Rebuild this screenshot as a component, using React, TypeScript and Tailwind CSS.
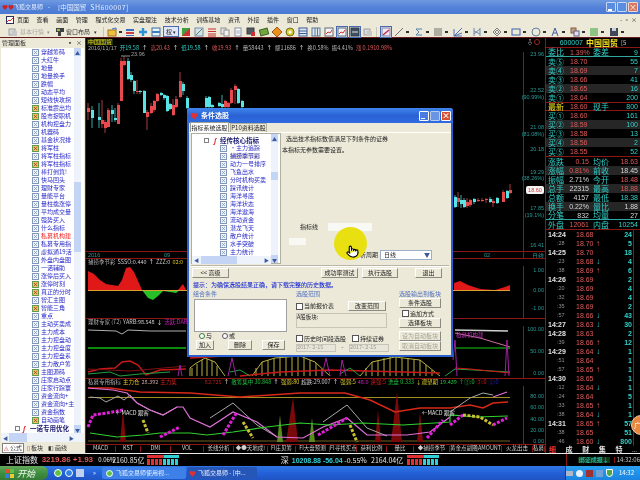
import { Pointer } from "lucide-react";
import type { ReactNode } from "react";

const treeItems: [string, boolean?, boolean?][] = [
  ["穿越筹码"], ["大红牛"], ["地量"], ["地量换手"], ["跌幅"], ["动态平均"], ["短线快攻拐"], ["标准震出均", true], ["股市捉职机", true],
  ["机构控盘力"], ["机器码"], ["基金状况排"], ["将军柱", true], ["将军柱指标"], ["将军柱指标", true], ["棒打倒箕!"], ["快马回头"], ["理财专家"],
  ["量能平台"], ["量柱擒涨停"], ["平均成交量"], ["强势买入"], ["什么指标"], ["私募机构建", false, true], ["私募专用指"], ["虚拟通19活"],
  ["外盘内盘图"], ["一诺辅助"], ["涨停后买入"], ["涨停时刻", true], ["真正的分时", true], ["智汇主图"], ["智能三角", true], ["重点"],
  ["主动买卖成"], ["主力成本"], ["主力控盘动"], ["主力控盘度"], ["主力控盘系"], ["主力散户筹"], ["主图源码", true], ["庄家启动点"],
  ["庄家行踪寰"], ["资金流向+"], ["资金流向+主"], ["资金指数"], ["自动画笔", true],
];

const dialogTree = ["•主力追踪", "捕捞季节彩", "动力一号排序", "飞鱼出水", "分时机构买卖", "踩讯统计", "海洋寻底", "海洋状态", "海洋遨海", "流动资金", "潜龙飞天", "散户统计", "水手突破", "主力统计"];

// x, body top, body bottom, wick top, wick bottom, red?
const candles: [number, number, number, number, number, boolean][] = [
  [88, 108, 112, 103, 120, true], [92, 110, 118, 106, 128, false], [99, 117, 120, 103, 128, false], [102, 120, 124, 100, 128, true],
  [105, 122, 128, 120, 133, true], [108, 110, 127, 108, 127, true], [112, 110, 114, 105, 122, false], [115, 118, 120, 108, 122, false],
  [118, 105, 124, 103, 124, true], [121, 61, 101, 58, 101, true], [124, 61, 65, 56, 66, true], [128, 61, 79, 58, 80, false],
  [131, 75, 80, 72, 82, false], [134, 81, 91, 80, 94, false], [137, 91, 92, 80, 94, true], [140, 91, 92, 90, 94, false],
  [144, 91, 113, 90, 113, false], [147, 112, 117, 110, 130, true], [151, 106, 113, 103, 114, true], [154, 101, 110, 100, 112, true],
  [157, 94, 101, 93, 102, true], [161, 93, 95, 92, 96, false], [164, 95, 98, 94, 100, false], [167, 96, 111, 95, 112, false],
  [170, 104, 109, 103, 110, false], [173, 105, 115, 99, 116, true], [176, 99, 107, 96, 108, true], [180, 81, 97, 72, 98, true],
  [183, 84, 91, 82, 95, false], [187, 98, 108, 96, 109, false],
  [206, 98, 107, 96, 108, false], [209, 97, 107, 96, 108, false], [212, 105, 107, 104, 108, false], [219, 103, 106, 102, 107, false],
  [222, 104, 107, 95, 108, false], [225, 101, 107, 100, 108, true], [228, 103, 107, 102, 108, true], [231, 90, 103, 88, 104, true],
  [235, 86, 90, 84, 104, true], [238, 89, 103, 88, 104, false], [242, 101, 107, 100, 108, false],
  [455, 197, 207, 195, 208, false], [458, 198, 202, 192, 207, true], [461, 200, 204, 195, 208, false], [464, 200, 207, 198, 208, false],
  [467, 202, 206, 198, 208, true], [470, 200, 205, 199, 207, true], [474, 199, 202, 198, 204, false], [478, 200, 201, 198, 202, true],
  [482, 200, 201, 198, 202, true], [486, 199, 200, 198, 203, true], [490, 199, 202, 197, 203, false], [493, 201, 203, 199, 207, true],
  [497, 198, 203, 197, 204, false], [503, 192, 202, 190, 202, true], [507, 191, 198, 190, 199, false], [510, 190, 193, 184, 194, true],
];

const ticks: [string, string, string, number, boolean?][] = [
  ["14:24", "18.68", "", 24, true], [":28", "18.70", "u", 5], ["14:25", "18.70", "", 18, true], [":23", "18.68", "d", 4], [":38", "18.69", "u", 6],
  ["14:26", "18.69", "", 2, true], [":20", "18.69", "", 4], [":32", "18.69", "", 4], [":35", "18.69", "", 2], [":57", "18.66", "d", 43],
  ["14:27", "18.63", "d", 30, true], ["14:28", "18.63", "", 2, true], [":39", "18.66", "u", 12], ["14:29", "18.64", "d", 1, true], [":51", "18.64", "", 1],
  [":57", "18.65", "u", 1], ["14:30", "18.65", "", 1, true], [":12", "18.64", "d", 1], [":24", "18.64", "", 5], [":33", "18.65", "u", 1],
  [":38", "18.64", "d", 1], ["14:31", "18.65", "u", 57, true], [":38", "18.65", "", 51], [":46", "18.60", "d", 800],
];

const bottomTabs: [string, string][] = [
  ["MACD", "w-[30px]"], ["KST", "w-[25px]"], ["DMI", "w-[30px]"], ["VOL", "w-[33px]"], ["长线分析", "w-[30px]"], ["◆●天地成!", "w-[34px]"], ["FI庄见筹", "w-[28px]"],
  ["FI大盘预测", "w-[34px]"], ["FI寻找买点", "w-[27px]"], ["获利比例", "w-[30px]"], ["量比", "w-[27px]"], ["◆捕捞季节", "w-[36px]"], ["黄金点副图", "w-[28px]"],
  ["AMOUNT", "w-[24px]"], ["火龙出击", "w-[31px]"], ["私募", "w-[12px]"],
];

function TreeIcon({ hot }: { hot?: boolean }) {
  return (
    <svg width="7" height="7" viewBox="0 0 7 7" className="shrink-0">
      <rect x="0.5" y="0.5" width="6" height="6" fill={hot ? "#e8c060" : "#eef2fa"} stroke={hot ? "#5f9a50" : "#7f97b8"} />
      <path d="M2 5L5 2M2 2l3 3" stroke={hot ? "#b04020" : "#8a96a8"} strokeWidth="0.8" />
    </svg>
  );
}

function ScrollArrow({ up }: { up?: boolean }) {
  return (
    <div className="h-[8px] w-full shrink-0 bg-[#c4d4f4] flex items-center justify-center text-[#3a5a9c] text-[5px] leading-none">{up ? "▲" : "▼"}</div>
  );
}

function Tool({ kind, arrow }: { kind: string; arrow?: boolean }) {
  const shapes: Record<string, ReactNode> = {
    folder: <><rect x="1" y="3" width="8" height="6" fill="#f0c040" stroke="#a07818" /><path d="M5 2l4-1v2" stroke="#3a70d0" fill="none" /></>,
    bars: <><rect x="1" y="2" width="8" height="2" fill="#3a70c0" /><rect x="1" y="5" width="8" height="2" fill="#d04040" /><rect x="1" y="8" width="8" height="1" fill="#3a70c0" /></>,
    cross: <path d="M5 1v8M1 5h8" stroke="#2a90d8" strokeWidth="2.4" />,
    box: <><rect x="1" y="1" width="8" height="8" fill="#e8f0f8" stroke="#3a70a0" /><rect x="1" y="4" width="8" height="2" fill="#3a80c0" /></>,
    flag: <><rect x="1" y="1" width="8" height="8" fill="#40a040" /><path d="M1 9L9 1v8z" fill="#d03030" /></>,
    grid: <><rect x="1" y="1" width="8" height="8" fill="#d8e0e8" stroke="#7090a8" /><path d="M2 8l6-6" stroke="#409060" /></>,
    lines: <path d="M1 2h8M1 4.5h8M1 7h8M1 9h8" stroke="#c83030" strokeWidth="1.2" />,
    pages: <><rect x="1" y="1" width="5" height="6" fill="#e8e8e8" stroke="#909090" /><rect x="4" y="3" width="5" height="6" fill="#f0f0f0" stroke="#909090" /></>,
    doc: <><rect x="2" y="1" width="6" height="8" fill="#fff" stroke="#8090a8" /><path d="M3 4h4M3 6h4" stroke="#a0a8b8" /></>,
    panel: <><rect x="1" y="1" width="7" height="6" fill="#505860" stroke="#404040" /><rect x="5" y="5" width="4" height="4" fill="#d03030" /></>,
    money: <><rect x="1" y="2" width="8" height="6" fill="#70a840" stroke="#406020" transform="rotate(-15 5 5)" /></>,
    diamond: <path d="M5 0l5 5-5 5-5-5z" fill="#e89020" stroke="#a05810" />,
    gear: <><circle cx="5" cy="5" r="4" fill="#d8c830" stroke="#707020" /><circle cx="5" cy="5" r="1.5" fill="#fff" /></>,
    tbl: <><rect x="1" y="1" width="8" height="8" fill="#dfe8f4" stroke="#3a5a90" /><path d="M1 4h8M1 6.5h8" stroke="#3a5a90" /></>,
    cols: <><rect x="1" y="1" width="8" height="8" fill="#dfe8f4" stroke="#5a7a90" /><path d="M4 1v8M6.5 1v8" stroke="#5a7a90" /></>,
    win: <><rect x="1" y="1" width="8" height="8" fill="#f4f4f4" stroke="#606878" /><path d="M2 7l2-2 2 1 2-3" stroke="#d03030" fill="none" /></>,
    dark: <><rect x="1" y="1" width="8" height="8" fill="#405060" stroke="#303840" /><path d="M2 5h6" stroke="#e0e0e0" /></>,
    pen: <><rect x="1" y="1" width="8" height="8" fill="#f0e8f0" stroke="#8080a0" /><path d="M2 8l6-5" stroke="#c03050" strokeWidth="1.5" /></>,
    slash: <path d="M1 9L9 1" stroke="#707070" />,
    sigma: <path d="M8 2H2l3 3-3 3h6" stroke="#5080b0" fill="none" />,
    vbars: <path d="M2 1v8M4 1v8M6 1v8M8 1v8" stroke="#707070" />,
    fan: <path d="M1 9L9 1M1 9l8-3M1 9h8M1 2v7" stroke="#5070b8" fill="none" />,
    fan2: <path d="M2 1v8M8 1v8M2 7l6-5M2 4l6 3" stroke="#7088b8" fill="none" />,
    wave: <path d="M1 5l4-4 4 4-4 4zM3 5l2-2 2 2-2 2z" stroke="#808080" fill="none" />,
    rect: <rect x="1" y="2" width="8" height="6" fill="none" stroke="#4060b0" />,
    oval: <circle cx="5" cy="5" r="4" fill="none" stroke="#6080a0" />,
    a: <path d="M2 9l3-8 3 8M3 6h4" stroke="#4060a0" fill="none" />,
    copy: <><rect x="1" y="1" width="5" height="5" fill="#c0a080" stroke="#806040" /><rect x="4" y="4" width="5" height="5" fill="#dde" stroke="#606080" /></>,
    rainbow: <path d="M1 2h8M1 4h8M1 6h8M1 8h8" stroke="#30a030" strokeWidth="1.1" />,
    save: <><rect x="1" y="1" width="8" height="8" fill="#404858" /><rect x="3" y="1" width="4" height="3" fill="#c8d0d8" /></>,
    gray: <><rect x="1" y="2" width="6" height="6" fill="#d8d8d8" stroke="#a0a0a0" /><rect x="4" y="4" width="5" height="5" fill="#c8c8c8" /></>,
    layout: <><path d="M1 1h8v4H6v4H3V5H1z" fill="#404040" /><rect x="2" y="2" width="3" height="2" fill="#90c040" /></>,
  };
  return (
    <div className="flex items-center shrink-0">
      <svg width="10" height="10" viewBox="0 0 10 10">{shapes[kind]}</svg>
      {arrow && <span className="ml-[2px] mr-[3px] w-[3px] h-[2px] bg-[#303030]" />}
    </div>
  );
}

function Btn({ w, children, off }: { w: string; children: ReactNode; off?: boolean }) {
  return (
    <div className={`${w} h-[10px] shrink-0 flex items-center justify-center whitespace-nowrap bg-[#ece9d8] border border-white border-r-[#8a8a80] border-b-[#8a8a80] text-[6px] leading-none ${off ? "text-[#a8a598]" : "text-[#222]"}`}>
      {children}
    </div>
  );
}

function Check({ label }: { label: string }) {
  return (
    <div className="flex items-center gap-[1px] text-[6px] leading-none text-[#222] shrink-0 whitespace-nowrap">
      <span className="w-[7px] h-[7px] bg-white border border-[#555]" />
      {label}
    </div>
  );
}

function Quote({ a, b, c, d, dark, yellow, line }: { a: string; b: string; c?: string; d: string; dark?: boolean; yellow?: boolean; line?: string }) {
  return (
    <div className={`h-[9px] shrink-0 flex items-center px-[2px] leading-none ${dark ? "bg-[#262626]" : ""} ${line ?? ""}`}>
      <span className={`w-[22px] text-[8px] ${yellow ? "text-[#f0e020]" : "text-[#30d0c8]"}`}>{a}</span>
      <span className="w-[23px] text-[7px] text-[#e05a5a] [font-family:'Liberation_Sans',sans-serif]">{b}</span>
      <span className="w-[20px] text-[8px] text-[#30d0c8]">{c}</span>
      <span className="flex-1 text-right text-[7px] text-[#30d0c8] [font-family:'Liberation_Sans',sans-serif]">{d}</span>
    </div>
  );
}

function Stat({ a, b, c, d, bc = "#e05a5a", dc = "#e05a5a", dark, line }: { a: string; b: string; c: string; d: string; bc?: string; dc?: string; dark?: boolean; line?: string }) {
  return (
    <div className={`h-[9px] shrink-0 flex items-center px-[2px] leading-none ${dark ? "bg-[#262626]" : ""} ${line ?? ""}`}>
      <span className="w-[19px] text-[8px] text-[#30d0c8]">{a}</span>
      <span className="w-[22px] text-right text-[7px] [font-family:'Liberation_Sans',sans-serif]" style={{ color: bc }}>{b}</span>
      <span className="w-[21px] pl-[4px] text-[8px] text-[#30d0c8]">{c}</span>
      <span className="flex-1 text-right text-[7px] [font-family:'Liberation_Sans',sans-serif]" style={{ color: dc }}>{d}</span>
    </div>
  );
}

function QuotePanel() {
  return (
    <div className="w-[95px] shrink-0 border-l border-[#8a1616] flex flex-col overflow-hidden">
      <div className="h-[10px] shrink-0 flex items-center justify-center gap-[3px] border-b border-[#8a1616] whitespace-nowrap">
        <span className="text-[7px] text-[#30d0c8] leading-none [font-family:'Liberation_Sans',sans-serif]">600007</span>
        <span className="text-[8px] text-[#f0e020] font-bold leading-none">中国国贸</span>
        <span className="text-[6px] text-[#c0c0c0] leading-none">[5</span>
      </div>
      <Quote a="委比" b="1.39%" c="委差" d="9" line="border-b border-[#30a8a0]" />
      <Quote a="卖⑤" b="18.70" d="55" />
      <Quote a="卖④" b="18.69" d="7" dark />
      <Quote a="卖③" b="18.66" d="41" />
      <Quote a="卖②" b="18.65" d="16" dark />
      <Quote a="卖①" b="18.64" d="200" />
      <Quote a="最新" b="18.60" c="现手" d="800" yellow line="border-y border-[#8a1616]" />
      <Quote a="买①" b="18.60" d="161" />
      <Quote a="买②" b="18.59" d="100" dark />
      <Quote a="买③" b="18.58" d="13" />
      <Quote a="买④" b="18.56" d="2" dark />
      <Quote a="买⑤" b="18.55" d="52" />
      <div className="h-px shrink-0 bg-[#8a1616]" />
      <Stat a="涨跌" b="0.15" c="均价" d="18.63" />
      <Stat a="涨幅" b="0.81%" c="前收" d="18.45" dc="#d8d8d8" dark />
      <Stat a="振幅" b="2.71%" c="今开" d="18.48" bc="#d8d8d8" />
      <Stat a="总手" b="22315" c="最高" d="18.88" bc="#d8d8d8" dark />
      <Stat a="总额" b="4157" c="最低" d="18.38" bc="#d8d8d8" dc="#30d0c8" />
      <Stat a="换手" b="0.22%" c="量比" d="1.88" bc="#d8d8d8" dc="#d8d8d8" dark />
      <Stat a="分笔" b="832" c="均量" d="27" bc="#d8d8d8" dc="#d8d8d8" line="border-b border-[#30a8a0]" />
      <Stat a="外盘" b="12061" c="内盘" d="10254" dc="#30d0c8" />
      <div className="h-[1px] shrink-0 bg-[#8a1616]" />
      <div className="flex flex-col shrink-0 border-r border-[#8a1616] w-[88px]">
        {ticks.map((t, i) => (
          <div key={i} className="h-[9px] shrink-0 flex items-center leading-none [font-family:'Liberation_Sans',sans-serif]">
            <span className={`w-[30px] ${t[4] ? "pl-[2px] text-[7px] text-[#e0e0e0] font-bold" : "pl-[11px] text-[#909090] text-[5.5px]"}`}>{t[0]}</span>
            <span className="w-[20px] text-[7px] text-[#e05a5a]">{t[1]}</span>
            <span className={`w-[8px] text-[8px] font-bold ${t[2] === "u" ? "text-[#e05a5a]" : "text-[#30d0c8]"}`}>{t[2] === "u" ? "↑" : t[2] === "d" ? "↓" : ""}</span>
            <span className="flex-1 text-right pr-[1px] text-[7px] text-[#30d0c8] font-bold">{t[3]}</span>
          </div>
        ))}
      </div>
      <div className="flex items-center justify-between pl-[3px] pr-[3px] h-[7px] shrink-0 bg-black text-[7px] leading-none">
        <span className="text-[#f03030] font-bold">细</span><span className="text-[#e0e0e0] font-bold">成</span><span className="text-[#e0e0e0] font-bold">财</span><span className="text-[#e0e0e0] font-bold">集</span><span className="text-[#e0e0e0] font-bold">特</span><span className="text-[#e0e0e0] text-[6px]">...</span>
      </div>
    </div>
  );
}

function Axis({ items }: { items: [number, string, string?][] }) {
  return (
    <>
      {items.map(([y, t, c], i) => (
        <text key={i} x="544" y={y + 2} textAnchor="end" fontSize="5.5" fill={c ?? "#2a9a98"} fontFamily="Liberation Sans">{t}</text>
      ))}
    </>
  );
}

function PanelLabel({ children }: { children: ReactNode }) {
  return (
    <div className="h-[8px] shrink-0 whitespace-nowrap overflow-hidden flex items-center gap-[2px] text-[5.5px] leading-none px-[2px] border-t border-[#8a1616]">
      {children}
    </div>
  );
}

function Charts() {
  return (
    <div className="flex-1 min-w-0 flex flex-col bg-black border-l border-[#8a1616]">
      <div className="h-[14px] shrink-0 flex flex-col relative">
        <div className="h-[7px] flex items-center justify-between pr-[6px]">
          <span className="ml-[1px] px-[1px] bg-[#203010] text-[#e8d820] text-[6px] leading-none">中国国贸</span>
          <span className="flex items-center gap-[1px] mr-[-1px]"><span className="text-[#e0e0e0] text-[6px] leading-none">⇩</span><span className="w-[6px] h-[6px] rounded-full border border-[#a02020]" /></span>
        </div>
        <div className="h-[7px] flex items-center gap-[3px] pl-[2px] whitespace-nowrap text-[5.5px] leading-none">
          <span className="text-[#b0b0b0]">2016/11/17</span>
          <span className="text-[#30d0c8]">开19.58</span><span className="text-white">↑</span>
          <span className="text-[#e05a5a]">高20.43</span><span className="text-white">↑</span>
          <span className="text-[#30d0c8]">低19.58</span><span className="text-white">↑</span>
          <span className="text-[#e05a5a]">收19.93</span><span className="text-white">↑</span>
          <span className="text-[#b8b8b8]">量58443</span><span className="text-white">↑</span>
          <span className="text-[#b8b8b8]">额11686</span><span className="text-white">↑</span>
          <span className="text-[#b8b8b8]">换0.58%</span>
          <span className="text-[#b8b8b8]">振4.41%</span>
          <span className="text-[#e05a5a]">涨 0.1910.98%</span>
        </div>
      </div>
      {/* candles */}
      <svg width="459" height="206" viewBox="86 52 459 206" className="block shrink-0">
        {candles.map(([x, t, b, wt, wb, red], i) => (
          <g key={i}>
            <line x1={x} x2={x} y1={wt} y2={wb} stroke={red ? "#a83a3e" : "#3aa8a8"} />
            <rect x={x - 1} y={t} width="3" height={b - t} fill={red ? "#e8494c" : "#58e4e4"} />
          </g>
        ))}
        <path d="M121 56h9" stroke="#909090" />
        <text x="131" y="56" fontSize="5.5" fill="#a0a0a0" fontFamily="Liberation Sans">23.96</text>
        <line x1="523.5" x2="523.5" y1="52" y2="258" stroke="#8a1616" />
        <Axis items={[[54, "23.96"], [90, "22.52"], [97, "(90.99%)"], [127, "21.08"], [134, "(81.08%)"], [149, "20.18"], [172, "19.29"], [178, "(38.26%)"], [208, "17.85"], [215, "(19.1%)"], [245, "16.41"]]} />
        <rect x="526" y="186" width="18" height="8" rx="2" fill="#f4f4f4" />
        <text x="535" y="192" textAnchor="middle" fontSize="5.5" fill="#d04040" fontFamily="Liberation Sans">18.60</text>
        <line x1="86" x2="545" y1="251.5" y2="251.5" stroke="#8a1616" />
        <text x="88" y="257" fontSize="5.5" fill="#2a9a98" fontFamily="Liberation Sans">2016</text>
        <text x="164" y="257" fontSize="5.5" fill="#2a9a98" fontFamily="Liberation Sans">09</text>
        <text x="484" y="257" fontSize="5.5" fill="#2a9a98" fontFamily="Liberation Sans">02</text>
        <text x="544" y="257.5" textAnchor="end" fontSize="6" fill="#2a9a98" fontFamily="Noto Sans CJK SC">日线</text>
      </svg>
      {/* oscillator */}
      <PanelLabel>
        <span className="text-[#b0b0b0]">捕捞季节彩</span><span className="text-[#c8c8c8]">SSSO:0.440</span><span className="text-white">↑</span><span className="text-[#c8c8c8]">ZZZ:0</span><span className="text-[#d8c820]">02:0</span>
      </PanelLabel>
      <svg width="459" height="52" viewBox="86 266 459 52" className="block shrink-0">
        <path d="M88 290V271L94 274L100 280L106 284L112 285L118 286L122 280L126 268L130 267L134 272L138 281L142 290Z" fill="#e01818" />
        <path d="M142 290L148 298L153 300L158 296L163 291L170 292L176 293L180 290Z" fill="#28c028" />
        <path d="M178 290L183 284L186 290Z" fill="#e01818" />
        <path d="M454 290V283L460 281L468 285L480 289L495 290L505 287L510 285V290Z" fill="#e01818" />
        <path d="M88 290.5H510" stroke="#d8a030" />
        <line x1="523.5" x2="523.5" y1="266" y2="318" stroke="#8a1616" />
        <Axis items={[[270, "1.00"], [290, "0.00"], [308, "-1.00"]]} />
      </svg>
      {/* 理财专家 */}
      <PanelLabel>
        <span className="text-[#b0b0b0]">理财专家 (72)</span><span className="text-[#c8c8c8]">YARB:98.548</span><span className="text-white">↓</span><span className="text-[#d020c0]">活跃:DAR</span>
      </PanelLabel>
      <svg width="459" height="52" viewBox="86 326 459 52" className="block shrink-0">
        <path d="M88 330L116 331L122 334L128 330L150 331L186 331" stroke="#b0b0b0" fill="none" />
        <path d="M88 348H186" stroke="#0c8a0c" strokeWidth="2" />
        <path d="M455 330L508 331" stroke="#d0d0d0" strokeWidth="1.4" />
        <path d="M455 333L480 338L510 347" stroke="#d070a0" />
        <path d="M455 348H510" stroke="#0c8a0c" strokeWidth="1.6" />
        <path d="M192 376V368M197 376V364M202 376V360M207 376V359M212 376V361M217 376V366M256 376V368M262 376V362M268 376V360M274 376V358M280 376V358M286 376V357M292 376V357M298 376V357M304 376V358M310 376V360M316 376V363M322 376V369M366 376V368M372 376V362M378 376V360M384 376V358M390 376V357M396 376V357M402 376V358M408 376V358M414 376V359M420 376V360M426 376V365M432 376V370" stroke="#b8b040" />
        <path d="M190 376V368L195 364L205 358L215 362L225 376M252 376L262 362L275 358L300 356L315 362L330 376M360 376L372 362L395 357L420 360L440 376" stroke="#b8b040" fill="none" />
        <path d="M88 372L100 369L115 368L122 362L130 361L138 365L146 375L160 370L186 369M190 358L225 356M240 376L280 372L330 370L440 373" stroke="#c81818" strokeWidth="1.4" fill="none" />
        <path d="M88 369L130 371L186 366" stroke="#801010" fill="none" />
        <path d="M88 374L110 372L120 376L140 374L170 372M230 372L240 370L250 376M340 374L350 368L360 376M445 376L455 369L510 372" stroke="#20a040" fill="none" />
        <path d="M178 376L180 365L182 376M228 376L232 358L236 376M322 376L326 358L330 376M340 376L342 360L346 376M453 360L455 340L457 376M505 376L507 340L509 376" stroke="#a020a0" fill="none" />
        <path d="M455 368L470 369L490 371L510 373" stroke="#d01818" strokeWidth="1.2" fill="none" />
        <line x1="523.5" x2="523.5" y1="326" y2="378" stroke="#8a1616" />
        <text x="456" y="337" fontSize="5.5" fill="#c030c0" fontFamily="Noto Sans CJK SC">私募机构建</text>
        <Axis items={[[329, "100.00"], [351, "50.00"], [373, "0.00"]]} />
      </svg>
      {/* 私募专用指标 */}
      <PanelLabel>
        <span className="text-[#b0b0b0]">私募专用指标</span><span className="text-[#e8c020]">主力仓</span><span className="text-[#d0a0a0]">28.392</span><span className="text-[#d02020]">主力集</span>
        <span className="ml-[26px] text-[#c02020]">82.725</span><span className="text-white">↑</span><span className="text-[#20c040]">散筹集中 30.848</span><span className="text-white">↑</span><span className="text-[#e0d030]">强弱:80</span><span className="text-[#c8c8c8]">超跌:29.007</span><span className="text-white">↑</span><span className="text-[#e0d030]">强弱:5</span><span className="text-[#d020c0]">48.0</span><span className="text-[#d02020]">资强:5</span><span className="text-[#20c040]">洗盘 0.333</span><span className="text-[#e0d030]">↓观望期</span><span className="text-[#20c040]">19.439</span><span className="text-[#20c040]">↑①:0</span><span className="text-[#d02020]">②:0</span><span className="text-[#2020c0]">③:0</span>
      </PanelLabel>
      <svg width="459" height="58" viewBox="86 386 459 58" className="block shrink-0">
        <path d="M88 397.5H510" stroke="#a09020" />
        <path d="M88 441H510" stroke="#706020" />
        <path d="M286 442L293 397L298 442ZM391 442L397 392L402 442ZM375 442L378 410L381 442ZM417 442L420 412L423 442ZM120 442L123 410L126 442Z" fill="#7a0a0a" />
        <path d="M277 442L280 415L283 442ZM309 442L312 418L315 442" fill="#5a8a20" />
        <path d="M88 388L110 388L125 390L140 392L190 393L240 397L300 393L345 393L370 400L395 412L420 408L450 408L470 405L483 408L493 403L508 402" stroke="#d82818" strokeWidth="1.4" fill="none" />
        <path d="M90 397L100 398L106 402L112 399L118 396L124 400L130 395L137 403L150 410L163 415L177 407M210 418L233 403L257 425L277 437M323 422L347 405L367 428L387 436M450 412L470 398L483 393L493 395" stroke="#a8a8a8" fill="none" />
        <path d="M88 388L100 389L113 390L127 393L137 403L150 410L163 415L177 407L183 407L190 418L210 427L233 412L257 422L277 437L303 438L323 427L347 418L367 435L387 435L407 435L430 432L450 417M493 397L507 392" stroke="#e070d8" strokeWidth="1.2" fill="none" />
        <path d="M90 433L117 437L143 435L160 433L190 433L207 435L233 432L267 427L300 423L330 425L363 423L403 425L450 422L450 415L477 417L508 416" stroke="#30d030" strokeWidth="1.2" fill="none" />
        <path d="M88 427L93 415L107 413L123 410M160 437L180 427M223 435L237 412M318 435L347 418M427 438L443 420M450 425L463 415M493 425L507 418" stroke="#e020d8" strokeWidth="3" strokeDasharray="3 1.5" fill="none" />
        <path d="M143 420L148 433M243 422L253 438M350 425L357 442M463 415L480 417L493 425" stroke="#c8c030" strokeWidth="3" strokeDasharray="3 1.5" fill="none" />
        <text x="116" y="415" fontSize="5.5" fill="#e0e0e0" fontFamily="Noto Sans CJK SC">←MACD 跟客</text>
        <text x="422" y="415" fontSize="5.5" fill="#e0e0e0" fontFamily="Noto Sans CJK SC">←MACD 跟客</text>
        <line x1="523.5" x2="523.5" y1="386" y2="444" stroke="#8a1616" />
        <Axis items={[[396, "80.00"], [407, "60.00"], [419, "40.00"], [430, "20.00"], [441, "0.00"]]} />
      </svg>
      <div className="h-[9px] shrink-0 flex items-center whitespace-nowrap border-t border-[#8a1616] text-[5.5px] leading-none text-[#d0d0d0]">
        {bottomTabs.map(([t, w]) => (
          <span key={t} className={`${w} shrink-0 text-center border-r border-[#8a1616]`}>{t}</span>
        ))}
      </div>
    </div>
  );
}

function LeftPanel() {
  return (
    <div className="w-[85px] shrink-0 flex flex-col bg-[#ece9d8]">
      <div className="h-[10px] shrink-0 flex items-center justify-between px-[2px] text-[6px] leading-none text-[#333]">
        <span>管理面板</span>
        <span className="flex gap-[3px] text-[6px] mr-[1px]"><span>▪</span><span>×</span></span>
      </div>
      <div className="flex-1 flex min-h-0 mx-[1px] bg-white">
        <div className="flex-1 min-w-0 flex flex-col overflow-hidden">
          {treeItems.map(([name, hot, red], i) => (
            <div key={i} className="h-[8px] shrink-0 flex items-center pl-[31px] gap-[2px]">
              <TreeIcon hot={hot} />
              <span className={`text-[6px] leading-none whitespace-nowrap ${red ? "text-[#f02020]" : "text-[#2828c8]"}`}>{name}</span>
            </div>
          ))}
          <div className="h-[8px] shrink-0 flex items-center pl-[14px] gap-[3px]">
            <span className="w-[5px] h-[5px] border border-[#808080] bg-white" />
            <span className="text-[#e02020] italic text-[7px] leading-none font-bold w-[4px]">ʃ</span>
            <span className="text-[6.5px] leading-none font-bold text-[#1a1a70] whitespace-nowrap">一诺专用优化</span>
          </div>
        </div>
        <div className="w-[7px] shrink-0 mr-[3px] bg-[#eef2fb] flex flex-col justify-between">
          <ScrollArrow up />
          <div className="mt-[126px] mb-[173px] flex-1 bg-[#c4d4f4]" />
          <ScrollArrow />
        </div>
      </div>
      <div className="h-[9px] shrink-0 mx-[1px] bg-[#eef2fb] flex items-center px-[2px] text-[#3a5a9c] text-[5px]">
        <span>◀</span><span className="ml-[1px] w-[18px] h-full bg-[#c4d4f4]" /><span className="ml-auto mr-[8px]">▶</span>
      </div>
      <div className="h-[11px] shrink-0 flex items-center text-[6px] leading-none text-[#333] pl-[2px] gap-[1px] whitespace-nowrap">
        <span className="flex items-center gap-[1px] bg-white px-[1px] h-[10px] border border-[#808080]"><span className="text-[#d03030]">◬</span>公式</span>
        <span className="flex items-center gap-[1px] px-[2px]"><span className="text-[#d03030]">▯</span>板块</span>
        <span className="flex items-center gap-[1px] px-[2px]"><span className="text-[#303030]">◧</span>画线</span>
      </div>
    </div>
  );
}

function ConditionDialog() {
  return (
    <div className="absolute left-[187px] top-[108px] w-[266px] h-[249px] flex flex-col border-2 border-t-0 border-[#2a5fd0] rounded-t-[3px] bg-[#ece9d8] text-[#222] z-10">
      <div className="h-[15px] shrink-0 -mx-[2px] rounded-t-[3px] flex items-center pl-[3px] pr-[2px] bg-gradient-to-b from-[#3f86ee] via-[#2a62d4] to-[#2f6ce0]">
        <span className="text-[#e03030] text-[8px] leading-none">♥</span>
        <span className="ml-[3px] text-white text-[7px] font-bold leading-none">条件选股</span>
        <span className="ml-auto flex gap-[1px]">
          <span className="w-[10px] h-[10px] bg-[#4a7ce0] border border-white rounded-[1px] flex items-end pl-[1px] pb-[1px]"><span className="w-[4px] h-[1px] bg-white" /></span>
          <span className="w-[10px] h-[10px] bg-[#6a94e4] border border-[#b8ccf0] rounded-[1px]" />
          <span className="w-[10px] h-[10px] bg-[#d85030] border border-white rounded-[1px] text-white text-[8px] font-bold leading-none flex items-center justify-center">×</span>
        </span>
      </div>
      <div className="h-[10px] shrink-0 flex items-end pl-[1px] text-[6px] leading-none border-b border-white">
        <span className="w-[39px] h-[10px] flex items-center justify-center bg-white border border-b-0 border-[#a0a090] rounded-t-[1px] whitespace-nowrap">指标系统选股</span>
        <span className="w-[37px] h-[9px] flex items-center justify-center border border-b-0 border-[#b0b0a0] ml-[1px] whitespace-nowrap">P10资料选股</span>
      </div>
      <div className="h-[131px] shrink-0 flex">
        <div className="w-[90px] shrink-0 ml-[2px] flex border border-[#b0b0a0] bg-white pr-[2px]">
          <div className="flex-1 min-w-0 flex flex-col">
            <div className="h-[8px] mt-[2px] shrink-0 flex items-center pl-[12px]">
              <span className="w-[5px] h-[5px] border border-[#808080]" />
              <span className="ml-[5px] w-[6px] text-[#e02020] italic text-[7px] font-bold leading-none">ʃ</span>
              <span className="text-[6.5px] font-bold text-[#1a1a70] leading-none whitespace-nowrap">经传核心指标</span>
            </div>
            {dialogTree.map((t, i) => (
              <div key={t} className="h-[8px] shrink-0 flex items-center pl-[28px] gap-[3px] overflow-hidden">
                <TreeIcon />
                <span className={`text-[6px] leading-none whitespace-nowrap text-[#2828c8] ${i === 1 ? "bg-[#e4e2d8]" : ""}`}>{t}</span>
              </div>
            ))}
            <div className="mt-auto h-[8px] shrink-0 bg-[#eef2fb] flex items-center text-[5px] text-[#3a5a9c] px-[2px]">
              <span>◀</span><span className="ml-[2px] w-[36px] h-full bg-[#c4d4f4]" /><span className="ml-auto">▶</span>
            </div>
          </div>
          <div className="w-[7px] shrink-0 bg-[#eef2fb] flex flex-col">
            <ScrollArrow up />
            <div className="mt-[30px] h-[8px] bg-[#c4d4f4]" />
            <div className="flex-1" />
            <ScrollArrow />
          </div>
        </div>
        <div className="flex-1 min-w-0 flex flex-col pl-[1px] text-[6px] leading-none">
          <div className="pt-[3px] pl-[4px] whitespace-nowrap">选出技术指标数值满足下列条件的证券</div>
          <div className="pt-[5px]">本指标无参数需要设置。</div>
          <div className="mt-[70px] flex items-center pl-[18px] gap-[10px]"><span>指标线</span><span className="w-[44px] h-[8px] bg-[#f8f8f4]" /></div>
          <div className="mt-[7px] ml-[7px] w-[17px] h-[7px] bg-[#f8f8f4]" />
          <div className="mt-[5px] flex items-center justify-end pr-[19px] gap-[2px]">
            <span>分析周期</span>
            <span className="w-[52px] h-[10px] bg-white border border-[#9ab0c8] flex items-center justify-between pl-[3px] pr-[1px]">日线<span className="text-[#3a5a9c] text-[6px]">▼</span></span>
          </div>
        </div>
      </div>
      <div className="h-[2px] shrink-0 mt-[1px] mx-[2px] border-y border-t-[#b8b5a8] border-b-white" />
      <div className="mt-[1px] shrink-0 flex items-center pl-[3px] pr-[9px]">
        <Btn w="w-[37px]">&lt;&lt; 高级</Btn>
        <div className="ml-auto flex gap-[4px]">
          <Btn w="w-[37px]">成功率测试</Btn>
          <Btn w="w-[36px]">执行选股</Btn>
          <span className="w-[9px]" />
          <Btn w="w-[27px]">退出</Btn>
        </div>
      </div>
      <div className="mt-[4px] pl-[4px] text-[6px] leading-none text-[#2030d0] font-medium whitespace-nowrap">提示：为确保选股结果正确，请下载完整的历史数据。</div>
      <div className="flex-1 flex mt-[3px] pl-[4px] text-[6px] leading-none">
        <div className="w-[100px] shrink-0 flex flex-col">
          <span className="text-[#5070c0]">组合条件</span>
          <div className="h-[33px] w-[93px] shrink-0 mt-[2px] ml-[1px] bg-white border border-[#a0a0a0]" />
          <div className="flex items-center h-[6px] shrink-0 mt-[1px] pl-[6px] gap-[10px]">
            <span className="flex items-center gap-[1px]"><span className="w-[6px] h-[6px] rounded-full border border-[#3a7a3a] bg-white" />与</span>
            <span className="flex items-center gap-[1px]"><span className="w-[6px] h-[6px] rounded-full border border-[#556] bg-white" />或</span>
          </div>
          <div className="flex mt-[1px] pl-[3px]">
            <Btn w="w-[18px]">加入</Btn>
            <span className="w-[14px]" />
            <Btn w="w-[24px]">删除</Btn>
            <span className="w-[10px]" />
            <Btn w="w-[23px]">保存</Btn>
          </div>
        </div>
        <div className="w-[100px] shrink-0 flex flex-col pl-[3px]">
          <span className="text-[#5070c0]">选股范围</span>
          <div className="flex items-center justify-between pr-[7px] mt-[4px]">
            <Check label="当前报价表" />
            <Btn w="w-[38px]">改变范围</Btn>
          </div>
          <div className="mt-[2px] w-[91px] h-[15px] shrink-0 border border-[#c8c5b8] text-[5.5px] leading-none pt-[1px]">A股板块:</div>
          <div className="mt-[7px] flex gap-[6px]"><Check label="历史时间段选股" /><Check label="持续证券" /></div>
          <div className="mt-[2px] flex items-center text-[5.5px] leading-none text-[#9a988c] whitespace-nowrap">
            <span className="w-[40px] h-[8px] bg-[#e8e6da] border border-[#c8c5b8] flex items-center">2017- 2-15</span>
            <span className="w-[13px] text-center text-[#222]">-</span>
            <span className="w-[40px] h-[8px] bg-[#e8e6da] border border-[#c8c5b8] flex items-center">2017- 2-15</span>
          </div>
        </div>
        <div className="flex-1 min-w-0 flex flex-col pl-[6px]">
          <span className="text-[#5070c0] whitespace-nowrap">选股输出到板块</span>
          <div className="mt-[1px]"><Btn w="w-[42px]">条件选股</Btn></div>
          <div className="mt-[2px] pl-[3px]"><Check label="追加方式" /></div>
          <div className="mt-[1px]"><Btn w="w-[42px]">选择板块</Btn></div>
          <div className="mt-[3px]"><Btn w="w-[42px]" off>设为自动板块</Btn></div>
          <div><Btn w="w-[42px]" off>取消自动板块</Btn></div>
        </div>
      </div>
    </div>
  );
}

function Bars() {
  return (
    <svg width="32" height="10" viewBox="0 0 32 10" className="shrink-0">
      <rect x="0" y="0" width="17" height="3" fill="#e03030" />
      <rect x="17" y="0" width="15" height="3" fill="#30d0d8" />
      {[0, 4, 8, 12, 16, 20, 24, 28].map((v, i) => (
        <rect key={v} x={v} y="4" width="3" height="6" fill={i < 4 ? "#e03030" : "#30d0d8"} />
      ))}
    </svg>
  );
}

export default function App() {
  return (
    <div className="relative w-[640px] h-[480px] overflow-hidden bg-black flex flex-col blur-[0.4px] [font-family:'Noto_Sans_CJK_SC','Liberation_Sans',sans-serif]">
      {/* title bar */}
      <div className="h-[14px] shrink-0 flex items-center pl-[2px] pr-[2px] bg-gradient-to-b from-[#6f9ae0] via-[#5482d8] to-[#4a7ad4]">
        <span className="text-[#d02020] text-[6px] leading-none w-[9px]">♥♥</span>
        <span className="ml-[2px] flex items-center text-[#e4eefc] text-[6px] leading-none whitespace-nowrap">
          <span>飞狐交易师</span>
          <span className="ml-[5px]">-</span>
          <span className="ml-[8px] text-[6.5px]">[中国国贸</span>
          <span className="ml-[4px] text-[7px] tracking-[0.4px]">SH600007]</span>
        </span>
        <span className="ml-auto flex gap-[1px]">
          <span className="w-[10px] h-[10px] bg-[#5a8ce0] border border-[#c8d8f4] rounded-[1px] flex items-end pl-[1px]"><span className="w-[4px] h-[2px] bg-white" /></span>
          <span className="w-[10px] h-[10px] bg-[#5a8ce0] border border-[#c8d8f4] rounded-[1px]" />
          <span className="w-[10px] h-[10px] bg-[#d87860] border border-[#f0d8d0] rounded-[1px] text-white text-[8px] leading-none flex items-center justify-center">×</span>
        </span>
      </div>
      {/* menu bar */}
      <div className="h-[12px] shrink-0 flex items-center bg-[#ece9d8] text-[6px] leading-none text-[#222]">
        <svg width="8" height="8" viewBox="0 0 8 8" className="ml-[6px] mr-[3px] shrink-0"><rect x="0.5" y="0.5" width="7" height="7" fill="#fff" stroke="#303060" /><path d="M1 6l2-2 1 1 3-3" stroke="#d03030" fill="none" /></svg>
        <div className="flex gap-[7.6px]">
          {["页面", "查看", "画面", "管理", "程式化交易", "实盘理注", "技术分析", "训练基地", "资讯", "外接", "插件", "窗口", "帮助"].map((m) => (
            <span key={m} className="whitespace-nowrap">{m}</span>
          ))}
        </div>
        <span className="ml-auto mr-[3px] text-[6px] text-[#404040]">- ▫ ×</span>
      </div>
      {/* toolbar */}
      <div className="h-[12px] shrink-0 flex items-center bg-[#ece9d8] border-b border-[#6a1a1a] pl-[8px] text-[6px] leading-none whitespace-nowrap">
        <div className="w-[47px] shrink-0 flex items-center">
          <Tool kind="gray" />
          <span className="ml-[2px] text-[#a8a8a0]">基本行情</span><span className="ml-[3px] text-[#909090] text-[5px]">▾</span>
        </div>
        <div className="w-[48px] shrink-0 flex items-center">
          <Tool kind="layout" />
          <span className="ml-[1px] text-[#303030]">窗口布局</span><span className="ml-[4px] text-[#303030] text-[5px]">▾</span>
        </div>
        <span className="w-px h-[10px] bg-[#c8c5b8] mr-[3px]" />
        <Tool kind="folder" arrow />
        <div className="flex gap-[3px]">
          <Tool kind="bars" /><Tool kind="cross" /><Tool kind="box" />
        </div>
        <span className="ml-[2px] w-[16px] h-[11px] flex items-center justify-center gap-[1px] bg-[#dfe6f6] border border-[#4a6ab0] text-[#202020] text-[6px]">权<span className="text-[5px]">▾</span></span>
        <div className="flex items-center gap-[3px] ml-[2px]">
          {["flag", "grid", "lines", "pages", "doc", "panel", "money", "diamond", "gear", "tbl", "cols", "win"].map((k, i) => <Tool key={i} kind={k} />)}
          <span className="bg-[#dfe6f6] border border-[#4a6ab0] flex -mx-px"><Tool kind="win" /></span>
          <span className="bg-[#dfe6f6] border border-[#4a6ab0] flex -mx-px"><Tool kind="dark" /></span>
          <Tool kind="gray" />
        </div>
        <span className="w-px h-[10px] bg-[#c8c5b8] ml-[3px] mr-[3px]" />
        <span className="bg-[#eef2fb] border border-[#4a6ab0] flex mr-[2px]"><Tool kind="pen" /></span>
        <div className="flex gap-[1.5px]">
          {["slash", "sigma", "vbars", "fan", "fan2", "wave", "rect", "oval", "a", "copy", "rainbow", "save"].map((k) => <Tool key={k} kind={k} arrow />)}
        </div>
      </div>
      {/* main */}
      <div className="h-[415px] shrink-0 flex">
        <LeftPanel />
        <Charts />
        <QuotePanel />
      </div>
      {/* status */}
      <div className="h-[13px] shrink-0 flex items-center bg-black border-t border-[#e8e8e8] text-[8px] leading-none whitespace-nowrap">
        <span className="ml-[6px] w-[36px] text-[#e8e8e8]">上证指数</span>
        <span className="w-[57px] text-[#e05a5a] font-bold [font-family:'Liberation_Sans',sans-serif]">3219.86 +1.93</span>
        <span className="w-[14px] text-[6px] text-[#e8e8e8]">0.06%</span>
        <span className="w-[35px] text-[7px] text-[#e8e8e8]">2160.85亿</span>
        <Bars />
        <span className="ml-[102px] w-[11px] text-[#e8e8e8]">深</span>
        <span className="w-[53px] text-[7px] text-[#30d0d8] font-bold [font-family:'Liberation_Sans',sans-serif]">10208.88 -56.04</span>
        <span className="w-[27px] text-[7px] text-[#e8e8e8]">-0.55%</span>
        <span className="w-[36px] text-[7px] text-[#e8e8e8]">2164.04亿</span>
        <Bars />
        <span className="ml-[127px] w-px h-full bg-[#8a1616]" />
        <span className="ml-[11px] px-[1px] text-[6px] text-[#30d0c8] bg-[#103818]">绑证成报↓</span>
        <span className="ml-[4px] pl-[2px] border-l border-[#8a1616] text-[6px] text-[#c8c8c8]">14:32:06</span>
      </div>
      {/* taskbar */}
      <div className="h-[14px] shrink-0 flex items-center bg-gradient-to-b from-[#2f78e4] via-[#2460d8] to-[#1f54c4] text-[6px] leading-none text-[#e8f0ff] whitespace-nowrap">
        <div className="w-[48px] h-full rounded-r-[6px] bg-gradient-to-b from-[#62a85c] via-[#3f8f3f] to-[#357a35] flex items-center pl-[5px] gap-[3px]">
          <svg width="9" height="9" viewBox="0 0 9 9"><rect x="0" y="0" width="4" height="4" fill="#e05030" /><rect x="5" y="0" width="4" height="4" fill="#60c040" /><rect x="0" y="5" width="4" height="4" fill="#3080e0" /><rect x="5" y="5" width="4" height="4" fill="#f0c830" /></svg>
          <span className="italic text-[9px] text-white/90">开始</span>
        </div>
        <span className="ml-[6px] w-[8px] h-[8px] rounded-full bg-[#60c040] border border-white" />
        <span className="ml-[3px] w-[8px] h-[8px] rounded-full bg-[#3080e0] border border-white" />
        <span className="ml-[3px] w-[8px] h-[8px] bg-[#c0d0f0]" />
        <span className="ml-[9px] text-[6px]">»</span>
        <div className="ml-[6px] w-[84px] h-[12px] rounded-[2px] bg-[#3c80e8] flex items-center pl-[4px] gap-[3px]">
          <span className="w-[7px] h-[7px] rounded-full bg-[#60c040] border border-white shrink-0" />飞狐交易师使用视...
        </div>
        <div className="w-[70px] h-[12px] rounded-[2px] bg-[#2656b8] flex items-center pl-[2px] gap-[2px] ml-[1px]">
          <span className="text-[#e03030] text-[7px]">♥</span>飞狐交易师 - [中...
        </div>
        <div className="ml-auto w-[75px] h-full bg-gradient-to-b from-[#2aa0f0] to-[#1a84e0] flex items-center justify-end pr-[6px] gap-[3px] border-l border-[#123a90]">
          <span className="w-[7px] h-[5px] bg-[#b0b8c8]" />
          <span className="w-[7px] h-[7px] rounded-full bg-[#e8f0ff]" />
          <span className="w-[7px] h-[7px] bg-[#a03030]" />
          <span className="w-[7px] h-[7px] bg-[#70a0d8]" />
          <span className="w-[7px] h-[8px] rounded-b-full bg-[#4aa84a] border border-white" />
          <span className="ml-[3px] text-[6px] text-white">14:32</span>
        </div>
      </div>

      <ConditionDialog />

      {/* screen recorder cursor highlight */}
      <div className="absolute left-[334px] top-[227px] w-[33px] h-[33px] rounded-full bg-[#e8e010] z-20" />
      <Pointer size={13} className="absolute left-[346px] top-[245px] z-30 text-black fill-white" strokeWidth={2} />
      <div className="absolute left-[631px] top-[415px] w-[20px] h-[20px] rounded-full bg-[#e88840] border border-[#f0c8a0] z-20 text-white text-[7px] leading-none flex items-center pl-[2px]">广</div>
    </div>
  );
}
